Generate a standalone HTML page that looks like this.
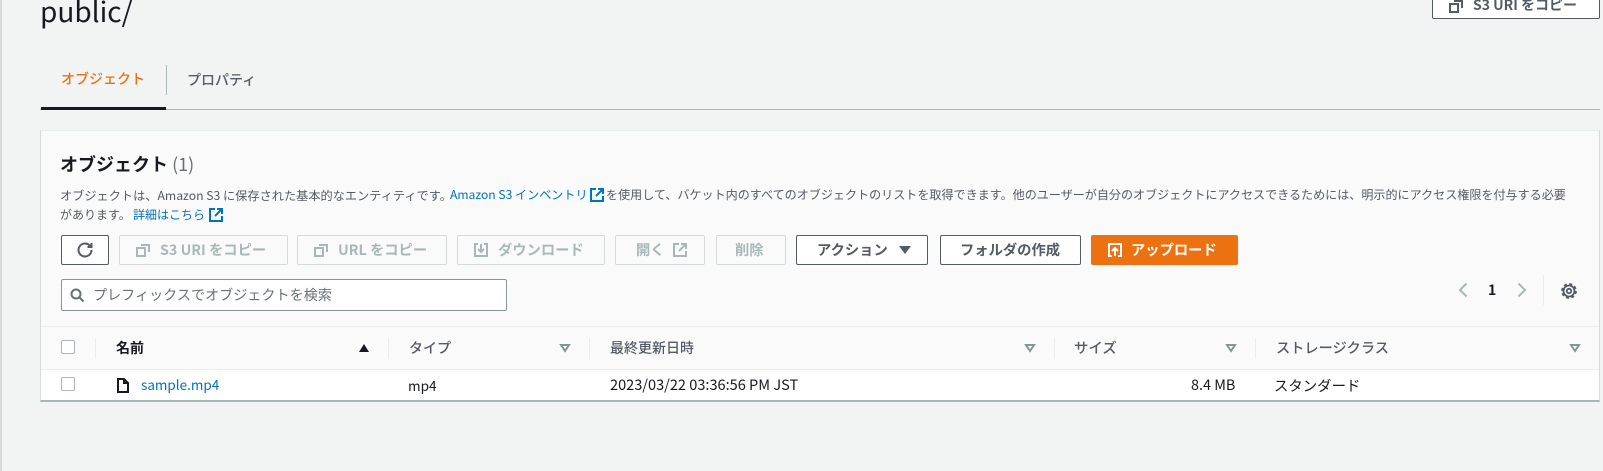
<!DOCTYPE html>
<html lang="ja"><head><meta charset="utf-8"><title>public/</title>
<style>
html,body{margin:0;padding:0}
body{width:1603px;height:471px;position:relative;overflow:hidden;background:#f2f3f3;font-family:"Noto Sans CJK JP","Liberation Sans",sans-serif;font-size:14px;color:#16191f}
.a{position:absolute;white-space:nowrap}
.t{position:absolute;white-space:nowrap;line-height:20px}
.x{font-size:12px;color:#545b64}
.b{position:absolute;box-sizing:border-box;height:30px;top:235px;border:1px solid #545b64;border-radius:2px;background:#fff}
.d{border-color:#d5dbdb;background:#fafafa}
.l{position:absolute;top:240px;line-height:20px;white-space:nowrap;font-weight:700;color:#545b64;font-size:14.3px}
.g{color:#aab7b8}
.cb{position:absolute;width:12px;height:12px;border:1px solid #aab7b8;border-radius:2px;background:#fff;left:61px}
.h{font-weight:500;color:#545b64}
.sep{position:absolute;width:1px;background:#eaeded;top:338px;height:21px}
svg{position:absolute;overflow:visible}
</style></head><body>
<div class="a" style="left:0;top:0;width:2px;height:471px;background:#d5dbdb"></div>
<div class="a" style="left:40px;top:-9px;font-size:28px;line-height:40px;color:#16191f">public/</div>
<div class="a" style="left:1432px;top:-12px;width:168px;height:31px;box-sizing:border-box;border:1px solid #545b64;border-radius:2px;background:#fff"></div>
<svg style="left:1449px;top:-1px" width="14" height="14" viewBox="0 0 14 14" fill="none" stroke="#545b64" stroke-width="2"><path d="M1 5h8v8H1zM5 2h8v7"/></svg>
<div class="l" style="left:1473px;top:-5px;font-size:14px">S3 URI をコピー</div>

<div class="t" style="left:61px;top:69px;color:#ec7211;font-weight:500;font-size:14px">オブジェクト</div>
<div class="a" style="left:166px;top:65px;width:1px;height:30px;background:#aab7b8"></div>
<div class="t" style="left:187px;top:70px;color:#545b64;font-weight:500;font-size:14px">プロパティ</div>
<div class="a" style="left:40px;top:109px;width:1560px;height:1px;background:#aab7b8"></div>
<div class="a" style="left:41px;top:107px;width:125px;height:3px;background:#16191f"></div>

<div class="a" style="left:40px;top:130px;width:1560px;height:272px;box-sizing:border-box;background:#fafafa;border:1px solid #eaeded;border-left:1px solid #d5dbdb;border-right:1px solid #d5dbdb;border-bottom:2px solid #aab7b8"></div>
<div class="a" style="left:41px;top:370px;width:1558px;height:30px;background:#fff"></div>
<div class="a" style="left:41px;top:326px;width:1558px;height:1px;background:#eaeded"></div>
<div class="a" style="left:41px;top:369px;width:1558px;height:1px;background:#eaeded"></div>

<div class="a" style="left:60px;top:152px;font-size:18px;line-height:24px;font-weight:700">オブジェクト <span style="font-weight:400;color:#687078;font-size:18px">(1)</span></div>
<div class="t x" style="left:60px;top:185px;font-size:12.2px">オブジェクトは、Amazon S3 に保存された基本的なエンティティです。</div>
<div class="t x" style="left:450px;top:185px;color:#0073bb;font-size:12.1px">Amazon S3 インベントリ</div>
<svg style="left:590px;top:188px" width="14" height="14" viewBox="0 0 14 14" fill="none" stroke="#0073bb" stroke-width="2"><path d="M6 1H1v12h12V8M8 1h5v5M13 1L6 8"/></svg>
<div class="t x" style="left:606px;top:185px;font-size:12.07px">を使用して、バケット内のすべてのオブジェクトのリストを取得できます。他のユーザーが自分のオブジェクトにアクセスできるためには、明示的にアクセス権限を付与する必要</div>
<div class="t x" style="left:60px;top:205px">があります。</div>
<div class="t x" style="left:133px;top:205px;color:#0073bb">詳細はこちら</div>
<svg style="left:209px;top:208px" width="14" height="14" viewBox="0 0 14 14" fill="none" stroke="#0073bb" stroke-width="2"><path d="M6 1H1v12h12V8M8 1h5v5M13 1L6 8"/></svg>

<div class="b" style="left:61px;width:48px"></div>
<svg style="left:77px;top:242px" width="16" height="16" viewBox="0 0 16 16" fill="none" stroke="#545b64" stroke-width="2"><path d="M14.5 8a6.5 6.5 0 1 1-2-4.7L14.5 5M14.5 1v4h-4"/></svg>
<div class="b d" style="left:119px;width:169px"></div><div class="l g" style="left:160px">S3 URI をコピー</div>
<svg style="left:136px;top:243px" width="14" height="14" viewBox="0 0 14 14" fill="none" stroke="#aab7b8" stroke-width="2"><path d="M1 5h8v8H1zM5 2h8v7"/></svg>
<div class="b d" style="left:297px;width:150px"></div><div class="l g" style="left:338px">URL をコピー</div>
<svg style="left:314px;top:243px" width="14" height="14" viewBox="0 0 14 14" fill="none" stroke="#aab7b8" stroke-width="2"><path d="M1 5h8v8H1zM5 2h8v7"/></svg>
<div class="b d" style="left:457px;width:148px"></div><div class="l g" style="left:498px">ダウンロード</div>
<svg style="left:474px;top:243px" width="14" height="14" viewBox="0 0 14 14" fill="none" stroke="#aab7b8" stroke-width="2"><path d="M4 1H1v12h12V1h-3M7 1v7M4 6l3 3 3-3"/></svg>
<div class="b d" style="left:615px;width:90px"></div><div class="l g" style="left:636px">開く</div>
<svg style="left:673px;top:243px" width="14" height="14" viewBox="0 0 14 14" fill="none" stroke="#aab7b8" stroke-width="2"><path d="M6 1H1v12h12V8M8 1h5v5M13 1L6 8"/></svg>
<div class="b d" style="left:716px;width:70px"></div><div class="l g" style="left:735px">削除</div>
<div class="b" style="left:796px;width:132px"></div><div class="l" style="left:817px">アクション</div>
<svg style="left:899px;top:246px" width="12" height="8" viewBox="0 0 12 8"><path d="M0 0h12L6 8z" fill="#545b64"/></svg>
<div class="b" style="left:940px;width:141px"></div><div class="l" style="left:960px">フォルダの作成</div>
<div class="b" style="left:1091px;width:147px;background:#ec7211;border-color:#ec7211"></div><div class="l" style="left:1131px;color:#fff">アップロード</div>
<svg style="left:1108px;top:243px" width="14" height="14" viewBox="0 0 14 14" fill="none" stroke="#fff" stroke-width="2"><path d="M4 13H1V1h12v12h-3M7 13V6M4 8l3-3 3 3"/></svg>

<div class="a" style="left:61px;top:279px;width:446px;height:32px;box-sizing:border-box;background:#fff;border:1px solid #879596;border-radius:2px"></div>
<svg style="left:70px;top:288px" width="14" height="14" viewBox="0 0 14 14" fill="none" stroke="#687078" stroke-width="2"><circle cx="6" cy="6" r="4.5"/><path d="M9.5 9.5L13.5 13.5"/></svg>
<div class="t" style="left:93px;top:285px;color:#687078;font-size:14.1px">プレフィックスでオブジェクトを検索</div>

<svg style="left:1459px;top:283px" width="8" height="14" viewBox="0 0 8 14" fill="none" stroke="#aab7b8" stroke-width="2"><path d="M7.5 0.5L1 7l6.5 6.5"/></svg>
<div class="t" style="left:1488px;top:280px;font-weight:700">1</div>
<svg style="left:1518px;top:283px" width="8" height="14" viewBox="0 0 8 14" fill="none" stroke="#aab7b8" stroke-width="2"><path d="M0.5 0.5L7 7l-6.5 6.5"/></svg>
<div class="a" style="left:1543px;top:275px;width:1px;height:30px;background:#eaeded"></div>
<svg style="left:1561px;top:283px" width="16" height="16" viewBox="0 0 16 16" fill="none" stroke="#545b64"><circle cx="8" cy="8" r="2.2" stroke-width="1.8"/><circle cx="8" cy="8" r="5.5" stroke-width="1.8"/><circle cx="8" cy="8" r="7" stroke-width="1.8" stroke-dasharray="3 2.5"/></svg>

<div class="cb" style="top:340px"></div>
<div class="sep" style="left:95px"></div>
<div class="t" style="left:116px;top:338px;font-weight:700">名前</div>
<svg style="left:359px;top:344px" width="10" height="8" viewBox="0 0 10 8"><path d="M0 8L5 0l5 8z" fill="#16191f"/></svg>
<div class="sep" style="left:388px"></div>
<div class="t h" style="left:409px;top:338px">タイプ</div>
<svg style="left:560px;top:344px" width="10" height="8" viewBox="0 0 10 8" fill="none" stroke="#879596" stroke-width="2"><path d="M1 1h8L5 7z"/></svg>
<div class="sep" style="left:589px"></div>
<div class="t h" style="left:610px;top:338px">最終更新日時</div>
<svg style="left:1025px;top:344px" width="10" height="8" viewBox="0 0 10 8" fill="none" stroke="#879596" stroke-width="2"><path d="M1 1h8L5 7z"/></svg>
<div class="sep" style="left:1054px"></div>
<div class="t h" style="left:1074px;top:338px;font-size:14.4px">サイズ</div>
<svg style="left:1226px;top:344px" width="10" height="8" viewBox="0 0 10 8" fill="none" stroke="#879596" stroke-width="2"><path d="M1 1h8L5 7z"/></svg>
<div class="sep" style="left:1255px"></div>
<div class="t h" style="left:1276px;top:338px;font-size:14.2px">ストレージクラス</div>
<svg style="left:1570px;top:344px" width="10" height="8" viewBox="0 0 10 8" fill="none" stroke="#879596" stroke-width="2"><path d="M1 1h8L5 7z"/></svg>

<div class="cb" style="top:377px"></div>
<svg style="left:117px;top:378px" width="12" height="15" viewBox="0 0 12 15" fill="none" stroke="#16191f" stroke-width="2"><path d="M1 1h6l4 4v9H1zM7 1v4h4"/></svg>
<div class="t" style="left:141px;top:374px;color:#0073bb;font-size:13.5px">sample.mp4</div>
<div class="t" style="left:408px;top:375px;font-size:13.6px">mp4</div>
<div class="t" style="left:610px;top:375px;font-size:14.55px">2023/03/22 03:36:56 PM JST</div>
<div class="t" style="left:1191px;top:375px;font-size:14.4px">8.4 MB</div>
<div class="t" style="left:1274px;top:376px;font-size:14.4px">スタンダード</div>
</body></html>
